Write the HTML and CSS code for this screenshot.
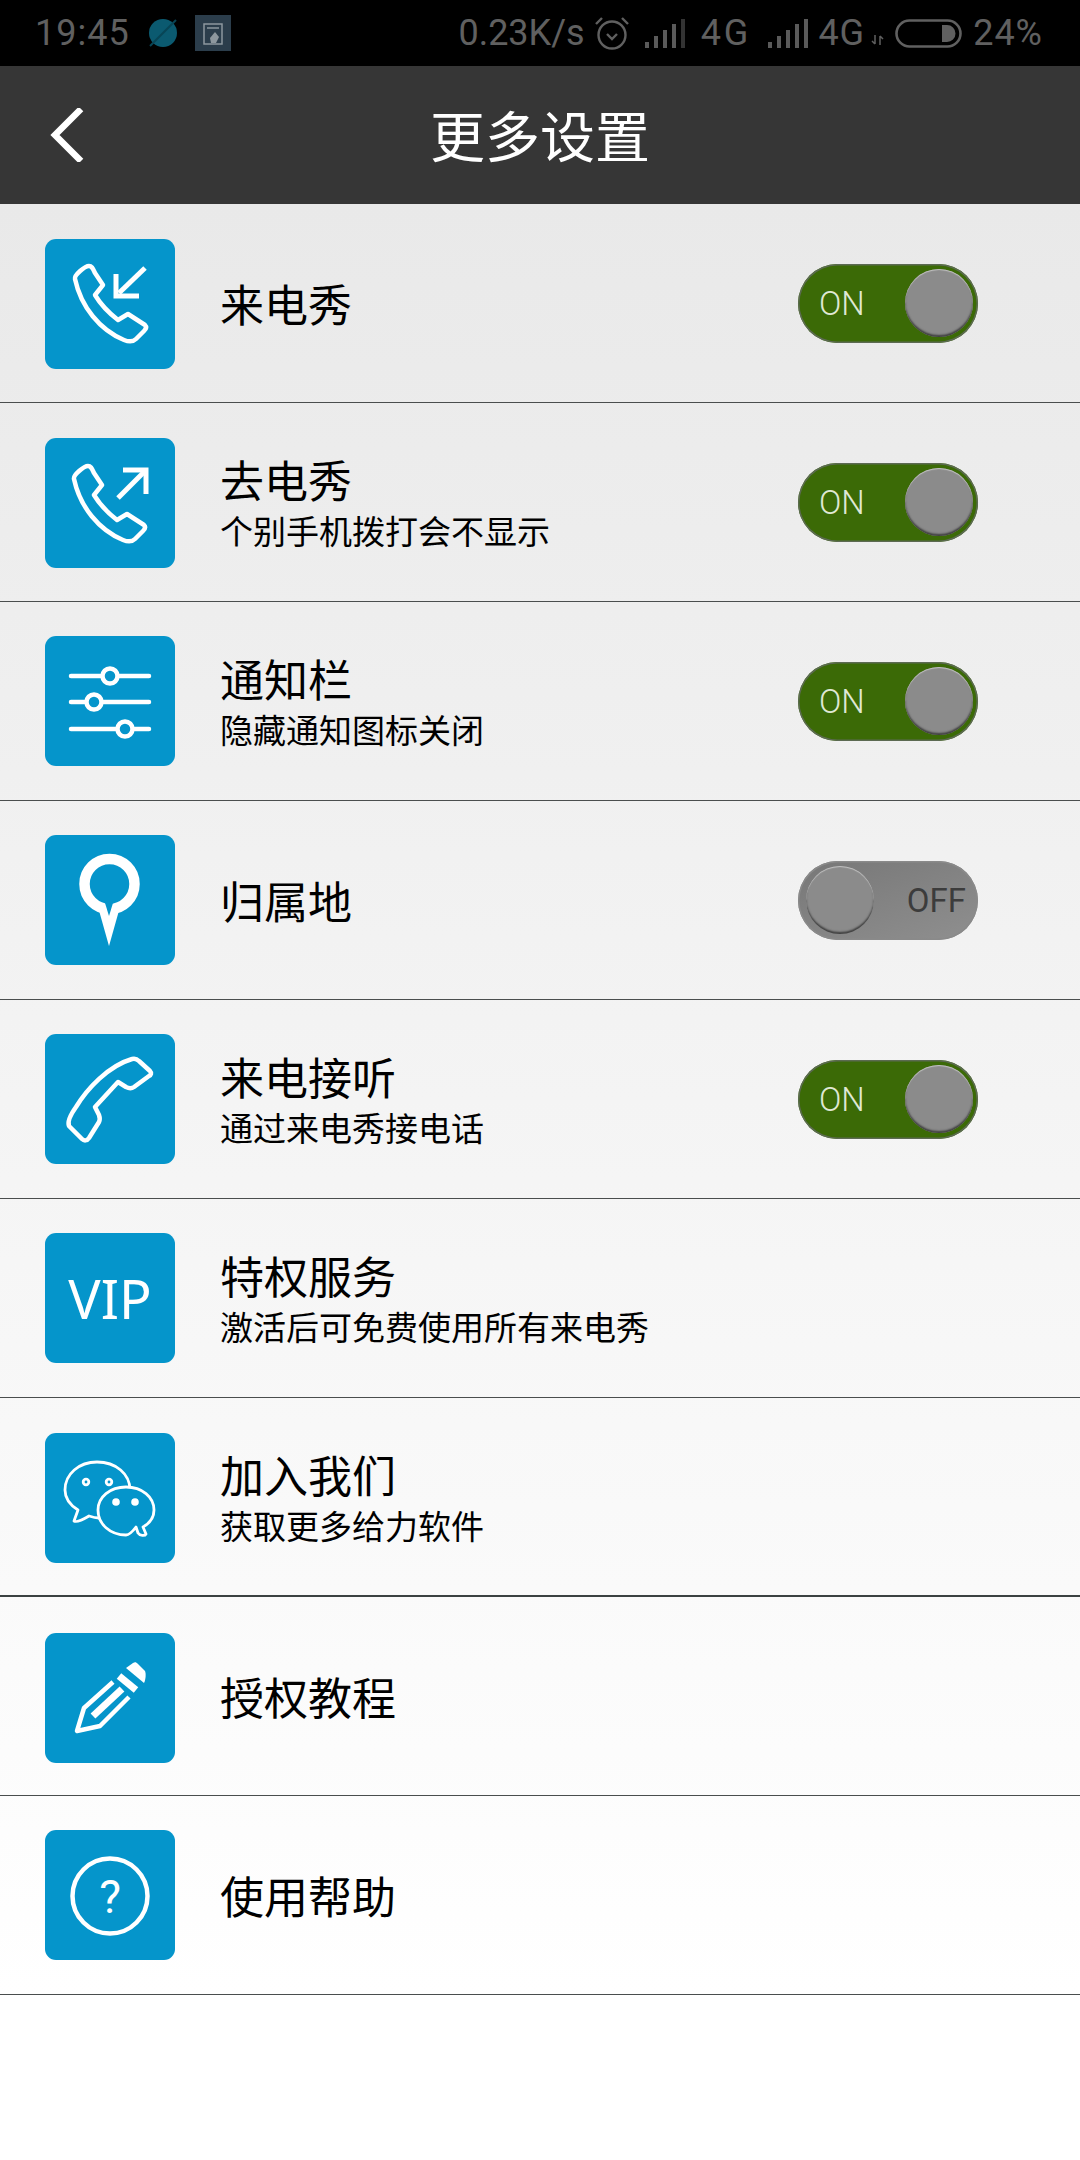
FILE: index.html
```html
<!DOCTYPE html>
<html lang="zh-CN">
<head>
  <meta charset="UTF-8" />
  <meta name="viewport" content="width=device-width, initial-scale=1.0"/>
  <title>更多设置</title>
  <link rel="stylesheet" href="styles.css">
</head>
<body>

<div class="status-bar">
  <div class="status-left">
    <span class="status-time">19:45</span>
    <svg class="blob" viewBox="0 0 30 28"><ellipse cx="15" cy="14" rx="14" ry="14" fill="#0b5a70"/><path d="M2 27 L28 1" stroke="#084556" stroke-width="2"/></svg>
    <svg class="app-icon" viewBox="0 0 36 36"><rect width="36" height="36" fill="#2b3d4b"/><rect x="9" y="9" width="18" height="20" fill="none" stroke="#8d979e" stroke-width="1.5"/><path d="M12 13h12" stroke="#8d979e" stroke-width="1.5"/><path d="M20 17l4 5-3 6h-5l-1-5z" fill="#8d979e"/></svg>
  </div>
  <div class="status-right">
    <span class="status-speed">0.23K/s</span>
    <svg class="alarm" viewBox="0 0 36 34" fill="none" stroke="#606060" stroke-width="2.4"><circle cx="18" cy="19" r="13.5"/><path d="M13 18l5 5 5-5"/><path d="M2 8l6-6M34 8l-6-6"/></svg>
    <svg class="signal" viewBox="0 0 40 29" fill="#5a5a5a"><rect x="0" y="23" width="4" height="6"/><rect x="9" y="17" width="4" height="12"/><rect x="18" y="11" width="4" height="18"/><rect x="27" y="5" width="4" height="24"/><rect x="36" y="0" width="4" height="29" fill="#333"/></svg>
    <span class="status-net net-first">4G</span>
    <svg class="signal" viewBox="0 0 40 29" fill="#5a5a5a"><rect x="0" y="23" width="4" height="6"/><rect x="9" y="17" width="4" height="12"/><rect x="18" y="11" width="4" height="18"/><rect x="27" y="5" width="4" height="24"/><rect x="36" y="0" width="4" height="29"/></svg>
    <span class="status-net net-second">4G</span>
    <svg class="net-arrows" viewBox="0 0 13 10" fill="none" stroke="#606060" stroke-width="1.5"><path d="M4 0v9M1 6l3 3M9 10V1M12 4L9 1"/></svg>
    <svg class="battery" viewBox="0 0 67 29"><rect x="1.5" y="1.5" width="64" height="26" rx="13" fill="none" stroke="#606060" stroke-width="2.6"/><path d="M47 6h5a8.500 8.500 0 0 1 0 17h-5z" fill="#606060"/></svg>
    <span class="status-battery">24%</span>
  </div>
</div>

<div class="top-bar">
  <svg class="back" viewBox="0 0 34 54" fill="none" stroke="#fff" stroke-width="6.500"><path d="M31 1L5 27l26 26"/></svg>
  <h1 class="page-title">更多设置</h1>
  <span></span>
</div>

<div class="settings-list">

  <div class="row">
    <svg class="row-icon icon-down" viewBox="0 0 130 130">
      <rect width="130" height="130" rx="11" fill="#0595cb"/>
      <g class="line">
        <path d="M30 40 C29 36 40 27 44 27 C47 27 48 30 50 34 L58 46 L50 56 C56 66 64 74 73 81 L83 75 L100 86 C102 88 101 90 99 92 L91 100 C88 103 84 103 79 101 C55 91 36 68 30 40z"/>
        <path class="thick" d="M100 29 L74 54"/>
        <path class="thick" d="M71 35 V57 H94"/>
      </g>
    </svg>
    <div class="row-text"><div class="row-title">来电秀</div></div>
    <div class="switch on"><span class="switch-label">ON</span><span class="knob"></span></div>
  </div>

  <div class="row">
    <svg class="row-icon icon-down" viewBox="0 0 130 130">
      <rect width="130" height="130" rx="11" fill="#0595cb"/>
      <g class="line">
        <path d="M29 41 C28 37 39 28 43 28 C46 28 47 31 49 35 L57 47 L49 57 C55 67 63 75 72 82 L82 76 L99 87 C101 89 100 91 98 93 L90 101 C87 104 83 104 78 102 C54 92 35 69 29 41z"/>
        <path class="thick" d="M73 60 L99 34"/>
        <path class="thick" d="M78 32 H101 V56"/>
      </g>
    </svg>
    <div class="row-text"><div class="row-title">去电秀</div><div class="row-sub">个别手机拨打会不显示</div></div>
    <div class="switch on"><span class="switch-label">ON</span><span class="knob"></span></div>
  </div>

  <div class="row">
    <svg class="row-icon" viewBox="0 0 130 130">
      <rect width="130" height="130" rx="11" fill="#0595cb"/>
      <g class="line fat">
        <path d="M26 40H104M26 66H104M26 93H104"/>
        <circle class="dot" cx="65" cy="40" r="7.500"/>
        <circle class="dot" cx="49" cy="66" r="7.500"/>
        <circle class="dot" cx="80" cy="93" r="7.500"/>
      </g>
    </svg>
    <div class="row-text"><div class="row-title">通知栏</div><div class="row-sub">隐藏通知图标关闭</div></div>
    <div class="switch on"><span class="switch-label">ON</span><span class="knob"></span></div>
  </div>

  <div class="row">
    <svg class="row-icon" viewBox="0 0 130 130">
      <rect width="130" height="130" rx="11" fill="#0595cb"/>
      <path d="M53 72 L64 111 L75 72z" fill="#fff"/>
      <circle cx="64.500" cy="49" r="25" fill="#0595cb" stroke="#fff" stroke-width="10.500"/>
      <path d="M60 68 L64 81 L68 68z" fill="#0595cb"/>
    </svg>
    <div class="row-text"><div class="row-title">归属地</div></div>
    <div class="switch off"><span class="knob"></span><span class="switch-label">OFF</span></div>
  </div>

  <div class="row">
    <svg class="row-icon" viewBox="0 0 130 130">
      <rect width="130" height="130" rx="11" fill="#0595cb"/>
      <g class="line">
        <path d="M24 92 C22 87 26 80 31 73 C42 55 63 32 87 25 C90 24 92 25 94 27 L105 37 C107 39 106 41 104 42 L89 53 C86 55 83 54 81 53 L73 48 L50 73 L54 81 C55 84 55 86 54 88 L44 104 C42 107 39 107 37 105z"/>
      </g>
    </svg>
    <div class="row-text"><div class="row-title">来电接听</div><div class="row-sub">通过来电秀接电话</div></div>
    <div class="switch on"><span class="switch-label">ON</span><span class="knob"></span></div>
  </div>

  <div class="row">
    <div class="row-icon vip-icon">VIP</div>
    <div class="row-text"><div class="row-title">特权服务</div><div class="row-sub">激活后可免费使用所有来电秀</div></div>
  </div>

  <div class="row row-strong">
    <svg class="row-icon icon-down" viewBox="0 0 130 130">
      <rect width="130" height="130" rx="11" fill="#0595cb"/>
      <g class="line thin">
        <path d="M33 77 L29 88 C32 90 39 86 44 83 C47 84 50 85 54 85 C75 85 85 72 85 57 C85 41 71 29 52 29 C34 29 20 41 20 57 C20 65 25 72 33 77z"/>
        <path class="bubble" d="M91 94 L93 100 C95 103 100 103 101 101 L98 94 C105 90 109 84 109 77 C109 64 97 54 81 54 C65 54 53 64 53 77 C53 91 65 102 81 102 C85 102 88 98 91 94z"/>
        <circle cx="41" cy="49" r="2.800"/>
        <circle cx="64" cy="49" r="2.800"/>
      </g>
      <circle cx="71" cy="69" r="3.800" fill="#fff"/>
      <circle cx="90" cy="69" r="3.800" fill="#fff"/>
    </svg>
    <div class="row-text"><div class="row-title">加入我们</div><div class="row-sub">获取更多给力软件</div></div>
  </div>

  <div class="row">
    <svg class="row-icon icon-down2" viewBox="0 0 130 130">
      <rect width="130" height="130" rx="11" fill="#0595cb"/>
      <path d="M81 35 L88 30 C90 29 91 29 93 31 L100 38 C101 40 101 46 99 50z" fill="#fff"/>
      <g class="line square">
        <path class="band" d="M74 43 L91 57"/>
        <path class="band" d="M48 83 L77 56"/>
        <path d="M68 49 L39 75 L32 98 L55 93 L84 64"/>
      </g>
    </svg>
    <div class="row-text"><div class="row-title">授权教程</div></div>
  </div>

  <div class="row">
    <svg class="row-icon" viewBox="0 0 130 130">
      <rect width="130" height="130" rx="11" fill="#0595cb"/>
      <circle class="line" cx="65" cy="66" r="37.500"/>
      <text class="help-mark" x="65" y="83" text-anchor="middle">?</text>
    </svg>
    <div class="row-text"><div class="row-title">使用帮助</div></div>
  </div>

</div>

</body>
</html>
```

FILE: styles.css
```css
* {
  box-sizing: border-box;
}
body {
  margin: 0;
  height: 2160px;
  background-color: #fff;
  font-family: "Noto Sans CJK SC", Roboto, sans-serif;
  overflow: hidden;
}

/* status bar */
.status-bar {
  height: 66px;
  background-color: #000;
  color: #606060;
  font-family: Roboto, sans-serif;
  font-size: 36px;
  display: flex;
  justify-content: space-between;
  align-items: center;
  padding: 0 37px 0 35px;
}
.status-left, .status-right {
  display: flex;
  align-items: center;
}
.status-time {
  width: 113px;
  letter-spacing: 1px;
}
.blob {
  width: 30px;
  height: 28px;
  margin-right: 17px;
}
.app-icon {
  width: 36px;
  height: 36px;
}
.alarm {
  width: 36px;
  height: 34px;
  margin: 0 15px 0 9px;
}
.signal {
  width: 40px;
  height: 29px;
}
.status-net {
  font-size: 36px;
}
.net-first {
  margin: 0 17px 0 16px;
  letter-spacing: 3px;
}
.net-second {
  margin: 0 6px 0 10px;
  letter-spacing: 1px;
}
.net-arrows {
  width: 13px;
  height: 10px;
  margin: 14px 11px 0 0;
}
.battery {
  width: 67px;
  height: 29px;
  margin-right: 11px;
}
.status-battery {
  letter-spacing: 1px;
}

/* title bar */
.top-bar {
  height: 138px;
  background-color: #363636;
  display: grid;
  grid-template-columns: 1fr auto 1fr;
  align-items: center;
  padding-left: 50px;
}
.back {
  width: 34px;
  height: 54px;
}
.page-title {
  margin: -3px 0 0 -50px;
  color: #fff;
  font-size: 55px;
  font-weight: 400;
  line-height: 1;
}

/* list */
.settings-list {
  background: linear-gradient(#e9e9e9, #fff);
}
.row {
  height: 199px;
  display: flex;
  align-items: center;
  gap: 45px;
  padding: 0 102px 0 45px;
  border-bottom: 1px solid #4a4e4e;
}
.row-strong {
  border-bottom: 2px solid #3c4242;
}
.row-icon {
  width: 130px;
  height: 130px;
  flex-shrink: 0;
}
.icon-down {
  margin-top: 2px;
}
.icon-down2 {
  margin-top: 4px;
}
.vip-icon {
  background-color: #0595cb;
  border-radius: 11px;
  color: #fff;
  font-family: "Noto Sans", sans-serif;
  font-size: 54px;
  display: flex;
  align-items: center;
  justify-content: center;
}
.row-text {
  flex: 1;
}
.row-title {
  font-size: 44px;
  line-height: 56px;
  color: #000;
}
.row-sub {
  font-size: 33px;
  line-height: 40px;
  color: #000;
  margin: 3px 0;
}

/* icon strokes */
.line {
  fill: none;
  stroke: #fff;
  stroke-width: 4.500;
  stroke-linejoin: round;
  stroke-linecap: round;
}
.line .thick {
  stroke-width: 5;
  stroke-linecap: butt;
  stroke-linejoin: miter;
}
.line.thin {
  stroke-width: 2.800;
}
.line.square {
  stroke-linecap: butt;
}
.line .band {
  stroke-width: 7;
}
.dot, .bubble {
  fill: #0595cb;
}
.help-mark {
  fill: #fff;
  font-family: Roboto, sans-serif;
  font-size: 46px;
}

/* on/off switch */
.switch {
  width: 180px;
  height: 79px;
  border-radius: 40px;
  display: flex;
  align-items: center;
  justify-content: space-between;
  font-family: Roboto, sans-serif;
  font-size: 33px;
}
.switch.on {
  background-color: #3b6a06;
  box-shadow: inset 0 0 0 1.500px #5c6a52;
  color: #dfe8d4;
  font-weight: 300;
  padding: 0 5px 0 21px;
}
.switch.off {
  background: linear-gradient(160deg, #777, #8f8f8f);
  box-shadow: inset 0 0 0 1.500px #8a8a8a;
  color: #3c3c3c;
  padding: 0 12px 0 8px;
}
.knob {
  width: 68px;
  height: 68px;
  border-radius: 50%;
  background-color: #8b8b8b;
  box-shadow: inset 0 1px 1px #c4c4c4, inset 0 -2px 2px #3e3e3e;
}
```
